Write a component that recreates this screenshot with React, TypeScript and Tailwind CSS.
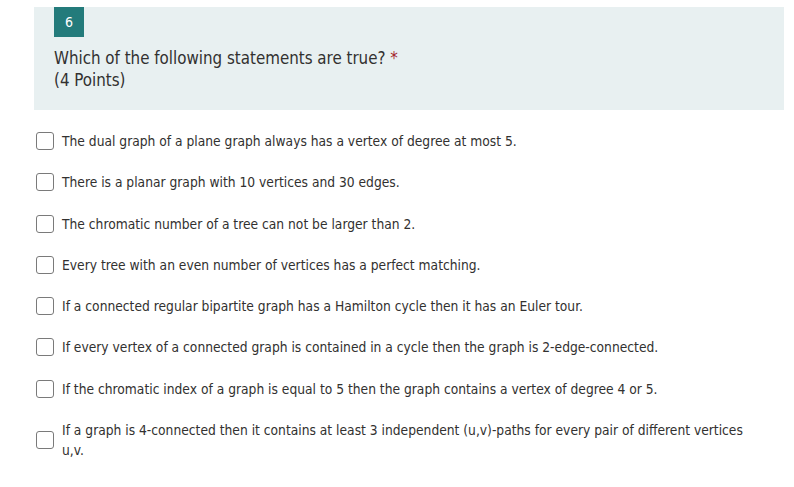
const options = [
  "The dual graph of a plane graph always has a vertex of degree at most 5.",
  "There is a planar graph with 10 vertices and 30 edges.",
  "The chromatic number of a tree can not be larger than 2.",
  "Every tree with an even number of vertices has a perfect matching.",
  "If a connected regular bipartite graph has a Hamilton cycle then it has an Euler tour.",
  "If every vertex of a connected graph is contained in a cycle then the graph is 2-edge-connected.",
  "If the chromatic index of a graph is equal to 5 then the graph contains a vertex of degree 4 or 5.",
  "If a graph is 4-connected then it contains at least 3 independent (u,v)-paths for every pair of different vertices u,v.",
];

export default function App() {
  return (
    <div className="w-[794px] h-[487px] bg-white font-['DejaVu_Sans_Condensed','DejaVu_Sans',sans-serif] text-[#323130]">
      <div className="pt-[7px] pl-[34px] pr-[10px]">
        <div className="bg-[#e8f0f1] pl-[20px] h-[103px]">
          <div className="w-[30px] h-[30px] bg-[#237b7b] text-white text-[14px] flex items-center justify-center">
            6
          </div>
          <div className="mt-[10px] text-[16.8px] leading-[22px]">
            <div>
              Which of the following statements are true? <span className="text-[#a4262c]">*</span>
            </div>
            <div>(4 Points)</div>
          </div>
        </div>
      </div>
      <div className="pl-[36px] pr-[30px] pt-[21px] flex flex-col gap-[21.3px] text-[13.7px] leading-[20px]">
        {options.map((o, i) => (
          <div key={i} className="flex items-center gap-[8px]">
            <div className="w-[18px] h-[18px] shrink-0 rounded-[3px] border border-[#7a7a7a] bg-white" />
            <div>{o}</div>
          </div>
        ))}
      </div>
    </div>
  );
}
